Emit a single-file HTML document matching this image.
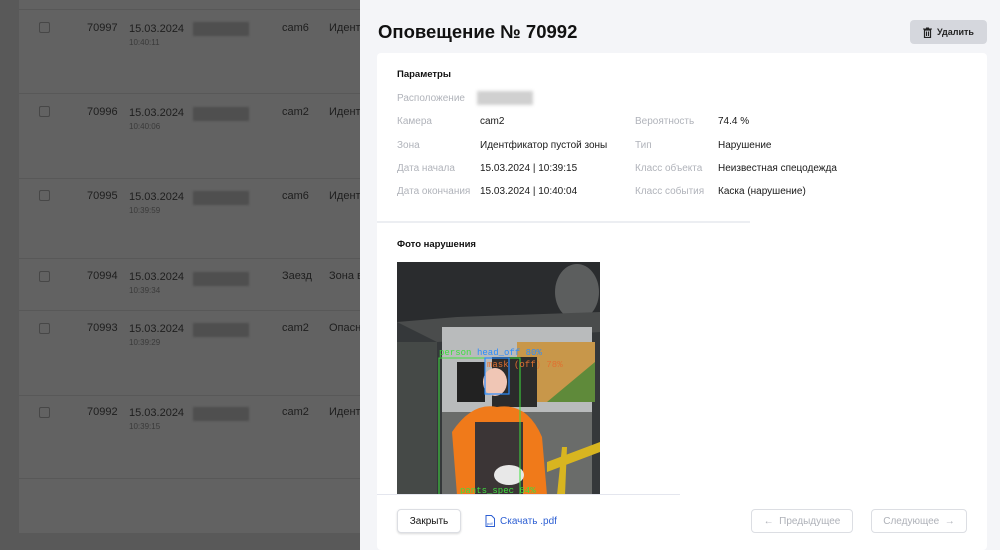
<!DOCTYPE html>
<html><head><meta charset="utf-8"><style>
*{margin:0;padding:0;box-sizing:border-box}
body{width:1000px;height:550px;overflow:hidden;font-family:"Liberation Sans","Noto Sans CJK SC",sans-serif;background:#595959;position:relative}
.tbl{position:absolute;left:19px;top:0;width:341px;height:533px;background:#626262}
.row{position:absolute;left:0;width:341px;border-top:1px solid #585858}
.a{position:absolute;font-size:11px;color:#1e1e1e;white-space:nowrap}
.cb{position:absolute;left:20px;width:11px;height:11px;border:1.5px solid #474747;border-radius:2px}
.t{position:absolute;font-size:8px;color:#3a3a3a}
.bl{position:absolute;left:174px;width:56px;height:14px;background:#4f4f4f;filter:blur(1px)}
.panel{position:absolute;left:360px;top:0;width:640px;height:550px;background:#f4f5f8}
h1{position:absolute;left:18px;top:21px;font-size:18.5px;font-weight:bold;color:#111}
.del{position:absolute;left:550px;top:20px;width:77px;height:24px;background:#d5d7dd;border-radius:4px;font-size:9px;font-weight:bold;color:#222;display:flex;align-items:center;justify-content:center;gap:5px}
.card{position:absolute;left:17px;top:53px;width:610px;height:497px;background:#fff;border-radius:4px}
.lbl{position:absolute;font-size:10px;color:#b0b3ba}
.val{position:absolute;font-size:10px;color:#1a1a1a}
.sec{position:absolute;font-size:9.5px;font-weight:bold;color:#111}
.btn{position:absolute;height:24px;border:1px solid #dcdee3;border-radius:4px;background:#fff;font-size:10px;display:flex;align-items:center;justify-content:center}
</style></head><body>
<div class="tbl">
<div class="row" style="top:9px"></div>
<div class="row" style="top:93px"></div>
<div class="row" style="top:178px"></div>
<div class="row" style="top:258px"></div>
<div class="row" style="top:310px"></div>
<div class="row" style="top:395px"></div>
<div class="row" style="top:478px"></div>
</div>
<div style="position:absolute;left:19px;top:0">
 <div class="cb" style="top:22px"></div><div class="a" style="left:68px;top:22px">70997</div><div class="a" style="left:110px;top:23px">15.03.2024</div><div class="t" style="left:110px;top:38px">10:40:11</div><div class="bl" style="top:22px"></div><div class="a" style="left:263px;top:22px">cam6</div><div class="a" style="left:310px;top:22px">Идентф</div>
 <div class="cb" style="top:106px"></div><div class="a" style="left:68px;top:106px">70996</div><div class="a" style="left:110px;top:107px">15.03.2024</div><div class="t" style="left:110px;top:122px">10:40:06</div><div class="bl" style="top:107px"></div><div class="a" style="left:263px;top:106px">cam2</div><div class="a" style="left:310px;top:106px">Идентф</div>
 <div class="cb" style="top:190px"></div><div class="a" style="left:68px;top:190px">70995</div><div class="a" style="left:110px;top:191px">15.03.2024</div><div class="t" style="left:110px;top:206px">10:39:59</div><div class="bl" style="top:191px"></div><div class="a" style="left:263px;top:190px">cam6</div><div class="a" style="left:310px;top:190px">Идентф</div>
 <div class="cb" style="top:271px"></div><div class="a" style="left:68px;top:270px">70994</div><div class="a" style="left:110px;top:271px">15.03.2024</div><div class="t" style="left:110px;top:286px">10:39:34</div><div class="bl" style="top:272px"></div><div class="a" style="left:263px;top:270px">Заезд</div><div class="a" style="left:310px;top:270px">Зона вт</div>
 <div class="cb" style="top:323px"></div><div class="a" style="left:68px;top:322px">70993</div><div class="a" style="left:110px;top:323px">15.03.2024</div><div class="t" style="left:110px;top:338px">10:39:29</div><div class="bl" style="top:323px"></div><div class="a" style="left:263px;top:322px">cam2</div><div class="a" style="left:310px;top:322px">Опасна</div>
 <div class="cb" style="top:407px"></div><div class="a" style="left:68px;top:406px">70992</div><div class="a" style="left:110px;top:407px">15.03.2024</div><div class="t" style="left:110px;top:422px">10:39:15</div><div class="bl" style="top:407px"></div><div class="a" style="left:263px;top:406px">cam2</div><div class="a" style="left:310px;top:406px">Идентф</div>
</div>

<div class="panel">
<h1>Оповещение № 70992</h1>
<div class="del"><svg width="9" height="11" viewBox="0 0 9 11"><rect x="1.5" y="3" width="6" height="7.5" fill="none" stroke="#222" stroke-width="1.2"/><path d="M0 2h9M3 1h3M3.5 4.5v4.5M5.5 4.5v4.5" stroke="#222" stroke-width="1.1"/></svg>Удалить</div>
<div class="card">
 <div class="sec" style="left:20px;top:16px">Параметры</div>
 <div class="lbl" style="left:20px;top:40px">Расположение</div><div style="position:absolute;left:100px;top:38px;width:56px;height:14px;background:#d0d0d0;filter:blur(1.5px)"></div>
 <div class="lbl" style="left:20px;top:63px">Камера</div><div class="val" style="left:103px;top:63px">cam2</div>
 <div class="lbl" style="left:20px;top:87px">Зона</div><div class="val" style="left:103px;top:87px">Идентфикатор пустой зоны</div>
 <div class="lbl" style="left:20px;top:110px">Дата начала</div><div class="val" style="left:103px;top:110px">15.03.2024 | 10:39:15</div>
 <div class="lbl" style="left:20px;top:133px">Дата окончания</div><div class="val" style="left:103px;top:133px">15.03.2024 | 10:40:04</div>
 <div class="lbl" style="left:258px;top:63px">Вероятность</div><div class="val" style="left:341px;top:63px">74.4 %</div>
 <div class="lbl" style="left:258px;top:87px">Тип</div><div class="val" style="left:341px;top:87px">Нарушение</div>
 <div class="lbl" style="left:258px;top:110px">Класс объекта</div><div class="val" style="left:341px;top:110px">Неизвестная спецодежда</div>
 <div class="lbl" style="left:258px;top:133px">Класс события</div><div class="val" style="left:341px;top:133px">Каска (нарушение)</div>
 <div style="position:absolute;left:0;top:168px;width:373px;height:2px;background:#eceef2"></div>
 <div class="sec" style="left:20px;top:186px">Фото нарушения</div>
 <svg style="position:absolute;left:20px;top:209px" width="203" height="233" viewBox="0 0 203 233">
  <rect width="203" height="233" fill="#35383a"/>
  <rect x="0" y="0" width="203" height="60" fill="#2a2c2e"/>
  <ellipse cx="180" cy="30" rx="22" ry="28" fill="#5c5e5e"/>
  <path d="M0 60 L60 55 L203 50 L203 70 L40 80 Z" fill="#4a4c4c"/>
  <rect x="0" y="80" width="40" height="153" fill="#454947"/>
  <rect x="45" y="65" width="150" height="170" fill="#b9bbbc"/>
  <rect x="120" y="80" width="78" height="60" fill="#c8974a"/>
  <path d="M150 140 L198 100 L198 140 Z" fill="#5f8a3a"/>
  <rect x="60" y="100" width="28" height="40" fill="#222"/>
  <rect x="95" y="95" width="45" height="50" fill="#2b2b2b"/>
  <rect x="45" y="150" width="150" height="83" fill="#6a6c6a"/>
  <path d="M55 170 Q75 140 100 145 Q130 140 145 175 L150 233 L60 233 Z" fill="#f07a1a"/>
  <rect x="78" y="160" width="48" height="73" fill="#3b3536"/>
  <ellipse cx="98" cy="120" rx="12" ry="14" fill="#f0c6b5"/>
  <ellipse cx="112" cy="213" rx="15" ry="10" fill="#e8e8e8"/>
  <path d="M150 200 L203 180 L203 190 L150 210Z M160 233 L165 185 L170 185 L168 233Z" fill="#d8b520"/>
  <rect x="42" y="96" width="81" height="137" fill="none" stroke="#3ee03e" stroke-width="1"/>
  <rect x="88" y="96" width="24" height="36" fill="none" stroke="#2a8cff" stroke-width="1.2"/>
  <text x="42" y="93" font-size="9" fill="#3ee03e" font-family="Liberation Mono">person</text>
  <text x="80" y="93" font-size="9" fill="#2a8cff" font-family="Liberation Mono">head_off 80%</text>
  <text x="90" y="105" font-size="9" fill="#e07030" font-family="Liberation Mono">mask (off) 78%</text>
  <text x="63" y="231" font-size="9" fill="#3ee03e" font-family="Liberation Mono">pants_spec 64%</text>
 </svg>
 <div style="position:absolute;left:0;top:441px;width:303px;height:1px;background:#e4e6ee"></div>
 <div class="btn" style="left:20px;top:456px;width:64px;color:#111;box-shadow:0 1px 2px rgba(0,0,0,.15)">Закрыть</div>
 <div style="position:absolute;left:108px;top:462px;font-size:10px;color:#2d5fd3;display:flex;gap:5px;align-items:center"><svg width="10" height="12" viewBox="0 0 10 12"><path d="M1 .5h5.5l3 3V11.5H1z" fill="none" stroke="#2d5fd3"/><text x="2" y="10" font-size="4" fill="#2d5fd3">pdf</text></svg>Скачать .pdf</div>
 <div class="btn" style="left:374px;top:456px;width:102px;color:#aeb1b8">← &nbsp;Предыдущее</div>
 <div class="btn" style="left:494px;top:456px;width:96px;color:#aeb1b8">Следующее &nbsp;→</div>
</div>
</div>
</body></html>
